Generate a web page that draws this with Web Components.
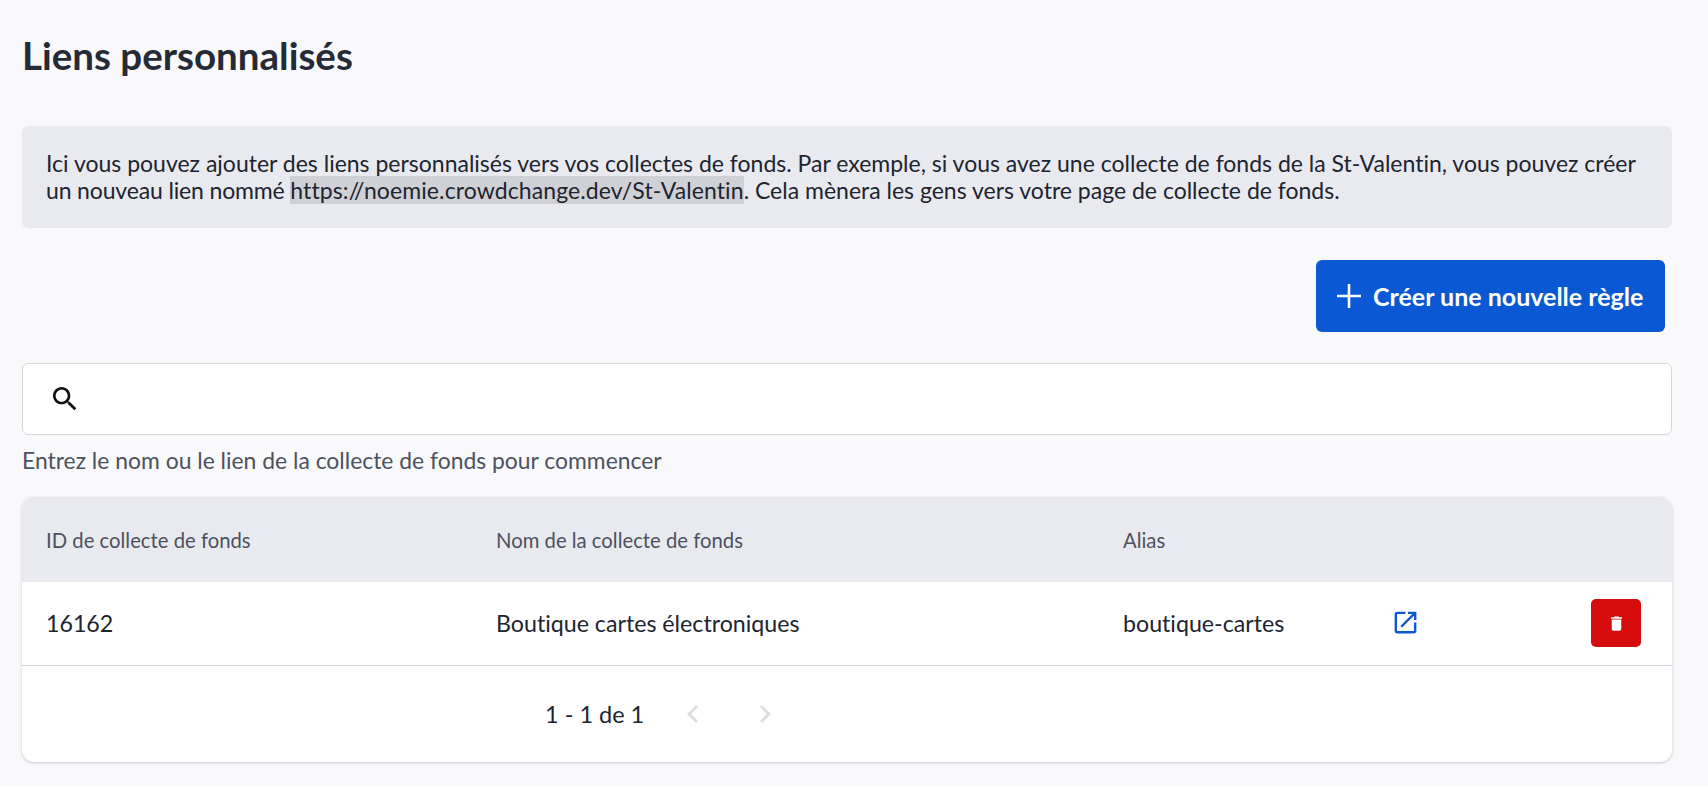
<!DOCTYPE html>
<html lang="fr">
<head>
<meta charset="utf-8">
<title>Liens personnalisés</title>
<style>
	html, body { margin: 0; height: 100%; }
	body {
		background: #f9f9fb;
		color: #20242f;
		font-family: Lato, "Liberation Sans", sans-serif;
		font-size: 23px;
		font-variant-ligatures: none;
		overflow: hidden;
	}
	links-page { padding: 0 36px 0 22px; }
</style>
</head>
<body>
<links-page>
	<span slot="title">Liens personnalisés</span>
	<info-box>Ici vous pouvez ajouter des liens personnalisés vers vos collectes de fonds. Par exemple, si vous avez une collecte de fonds de la St-Valentin, vous pouvez créer <span>un nouveau lien nommé </span><mark>https://noemie.crowdchange.dev/St-Valentin</mark>. Cela mènera les gens vers votre page de collecte de fonds.</info-box>
	<action-button>Créer une nouvelle règle</action-button>
	<search-field>Entrez le nom ou le lien de la collecte de fonds pour commencer</search-field>
	<rules-table>
		<rule-row fund-id="16162" name="Boutique cartes électroniques" alias="boutique-cartes"></rule-row>
	</rules-table>
</links-page>

<script>
const linksPageTemplate = document.createElement("template");
linksPageTemplate.innerHTML =
`<style>
	:host { display: block; }
	h1 {
		margin: 0;
		padding-top: 33px;
		height: 126px;
		box-sizing: border-box;
		font-size: 38.5px;
		line-height: 44px;
		font-weight: 700;
		color: #252a37;
	}
</style>
<h1><slot name="title"></slot></h1>
<slot></slot>`;

const infoBoxTemplate = document.createElement("template");
infoBoxTemplate.innerHTML =
`<style>
	:host {
		display: block;
		background: #e9eaef;
		border-radius: 6px;
		padding: 24px 25px 24px 24px;
		height: 102px;
		box-sizing: border-box;
		font-size: 23px;
		line-height: 27px;
		color: #20242f;
	}
	::slotted(span) { letter-spacing: -.15px; }
	::slotted(mark) { background: #d0d1d6; color: inherit; letter-spacing: .1px; }
</style>
<slot></slot>`;

const actionButtonTemplate = document.createElement("template");
actionButtonTemplate.innerHTML =
`<style>
	:host {
		display: flex;
		justify-content: flex-end;
		padding: 32px 7px 31px 0;
	}
	button {
		display: flex;
		align-items: center;
		gap: 12px;
		width: 349px;
		height: 72px;
		padding: 0 0 0 21px;
		box-sizing: border-box;
		border: 0;
		border-radius: 6px;
		background: #0a58d3;
		color: #fff;
		font: 700 25px Lato, "Liberation Sans", sans-serif;
		font-variant-ligatures: none;
	}
	svg { width: 24px; height: 24px; flex: none; }
</style>
<button>
	<svg viewBox="0 0 24 24"><path d="M12 0v24M0 12h24" stroke="#fff" stroke-width="2.6" fill="none"/></svg>
	<slot></slot>
</button>`;

const searchFieldTemplate = document.createElement("template");
searchFieldTemplate.innerHTML =
`<style>
	:host { display: block; }
	.field {
		display: flex;
		align-items: center;
		height: 72px;
		box-sizing: border-box;
		padding-left: 26px;
		background: #fff;
		border: 1px solid #d5d6da;
		border-radius: 6px;
	}
	svg { width: 32px; height: 32px; color: #111; margin-top: -1px; }
	p {
		margin: 0;
		height: 62px;
		padding-top: 11px;
		box-sizing: border-box;
		font-size: 22.9px;
		line-height: 28px;
		color: #4c5160;
	}
</style>
<div class="field">
	<svg viewBox="0 0 24 24" fill="currentColor"><path d="M15.5 14h-.79l-.28-.27C15.41 12.59 16 11.11 16 9.5 16 5.91 13.09 3 9.5 3S3 5.91 3 9.5 5.91 16 9.5 16c1.61 0 3.09-.59 4.23-1.57l.27.28v.79l5 4.99L20.49 19l-4.99-5zm-6 0C7.01 14 5 11.99 5 9.5S7.01 5 9.5 5 14 7.01 14 9.5 11.99 14 9.5 14z"/></svg>
</div>
<p><slot></slot></p>`;

const rulesTableTemplate = document.createElement("template");
rulesTableTemplate.innerHTML =
`<style>
	:host {
		display: block;
		background: #fff;
		border-radius: 12px;
		overflow: hidden;
		box-shadow: 0 1px 3px rgba(60, 70, 100, .28);
	}
	.head {
		display: grid;
		grid-template-columns: 449px 627px 1fr;
		align-items: center;
		height: 85px;
		background: #e9eaef;
		font-size: 20.3px;
		color: #4c5160;
	}
	.head span { padding-left: 25px; }
	.head span:first-child { padding-left: 24px; }
	.pager {
		display: flex;
		align-items: center;
		height: 96px;
		padding-left: 523px;
		font-size: 23.5px;
		color: #20242f;
	}
	.pager svg { width: 36px; height: 36px; color: #dfdfe1; flex: none; }
	.prev { margin-left: 31px; }
	.next { margin-left: 36px; }
</style>
<div class="head">
	<span>ID de collecte de fonds</span>
	<span>Nom de la collecte de fonds</span>
	<span>Alias</span>
</div>
<slot></slot>
<div class="pager">
	<span>1 - 1 de 1</span>
	<svg class="prev" viewBox="0 0 24 24" fill="currentColor"><path d="M15.41 7.41L14 6l-6 6 6 6 1.41-1.41L10.83 12z"/></svg>
	<svg class="next" viewBox="0 0 24 24" fill="currentColor"><path d="M10 6L8.59 7.41 13.17 12l-4.58 4.59L10 18l6-6z"/></svg>
</div>`;

const ruleRowTemplate = document.createElement("template");
ruleRowTemplate.innerHTML =
`<style>
	:host {
		display: grid;
		grid-template-columns: 449px 627px 293px 1fr;
		align-items: center;
		height: 84px;
		padding-bottom: 1px;
		box-sizing: border-box;
		border-bottom: 1px solid #cfd4dc;
		font-size: 23.2px;
		color: #20242f;
	}
	span { padding-left: 25px; }
	#fund-id { padding-left: 24px; }
	.actions { display: flex; align-items: center; justify-content: space-between; padding-right: 31px; }
	.open { width: 29px; height: 29px; color: #0a58d3; margin-top: -2px; }
	button {
		display: flex;
		align-items: center;
		justify-content: center;
		width: 50px;
		height: 48px;
		padding: 0;
		border: 0;
		border-radius: 5px;
		background: #d60b0b;
	}
	button svg { width: 19px; height: 19px; color: #fff; }
</style>
<span id="fund-id"></span>
<span id="name"></span>
<span id="alias"></span>
<div class="actions">
	<svg class="open" viewBox="0 0 24 24" fill="currentColor"><path d="M19 19H5V5h7V3H5c-1.11 0-2 .9-2 2v14c0 1.1.89 2 2 2h14c1.1 0 2-.9 2-2v-7h-2v7zM14 3v2h3.59l-9.83 9.83 1.41 1.41L19 6.41V10h2V3h-7z"/></svg>
	<button><svg viewBox="0 0 24 24" fill="currentColor"><path d="M6 19c0 1.1.9 2 2 2h8c1.1 0 2-.9 2-2V7H6v12zM19 4h-3.5l-1-1h-5l-1 1H5v2h14V4z"/></svg></button>
</div>`;

function simpleElement(name, template) {
	customElements.define(name, class extends HTMLElement {
		constructor() {
			super();
			this.attachShadow({mode: 'open'}).appendChild(template.content.cloneNode(true));
		}
	});
}

simpleElement('links-page', linksPageTemplate);
simpleElement('info-box', infoBoxTemplate);
simpleElement('action-button', actionButtonTemplate);
simpleElement('search-field', searchFieldTemplate);
simpleElement('rules-table', rulesTableTemplate);

customElements.define('rule-row', class extends HTMLElement {
	constructor() {
		super();
		this.attachShadow({mode: 'open'}).appendChild(ruleRowTemplate.content.cloneNode(true));
	}

	connectedCallback() {
		this.shadowRoot.getElementById("fund-id").textContent = this.getAttribute("fund-id");
		this.shadowRoot.getElementById("name").textContent = this.getAttribute("name");
		this.shadowRoot.getElementById("alias").textContent = this.getAttribute("alias");
	}
});
</script>
</body>
</html>
